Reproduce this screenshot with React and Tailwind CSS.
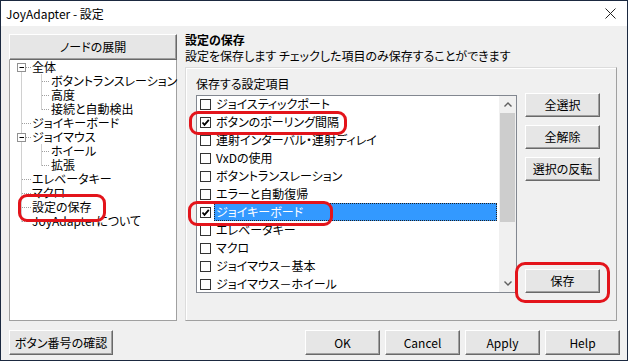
import React from 'react';

const font = "[font-family:'Noto_Sans_CJK_JP','Noto_Sans',sans-serif] [font-feature-settings:'palt']";

// ツリーの項目 (level 0 = ルート, box = 展開ボックスあり)
const treeItems = [
  { label: '全体', level: 0, box: true },
  { label: 'ボタントランスレーション', level: 1 },
  { label: '高度', level: 1 },
  { label: '接続と自動検出', level: 1 },
  { label: 'ジョイキーボード', level: 0 },
  { label: 'ジョイマウス', level: 0, box: true },
  { label: 'ホイール', level: 1 },
  { label: '拡張', level: 1 },
  { label: 'エレベータキー', level: 0 },
  { label: 'マクロ', level: 0 },
  { label: '設定の保存', level: 0 },
  { label: 'JoyAdapterについて', level: 0 },
];

const saveItems = [
  { label: 'ジョイスティックポート', checked: false },
  { label: 'ボタンのポーリング間隔', checked: true },
  { label: '連射インターバル・連射ディレイ', checked: false },
  { label: 'VxDの使用', checked: false },
  { label: 'ボタントランスレーション', checked: false },
  { label: 'エラーと自動復帰', checked: false },
  { label: 'ジョイキーボード', checked: true, selected: true },
  { label: 'エレベータキー', checked: false },
  { label: 'マクロ', checked: false },
  { label: 'ジョイマウス－基本', checked: false },
  { label: 'ジョイマウス－ホイール', checked: false },
];

const ROW = 14;

function Btn({ children, className = '' }) {
  return (
    <button
      className={`flex items-center justify-center bg-[#e6e6e6] border border-t-white border-l-white border-r-[#696969] border-b-[#696969] shadow-[inset_-1px_-1px_0_#a0a0a0] text-[12px] text-black ${className}`}
    >
      {children}
    </button>
  );
}

function TreeLines() {
  const c = (i) => i * ROW + 7.5;
  const dash = { stroke: '#a0a0a0', strokeWidth: 1, strokeDasharray: '1 1' };
  return (
    <svg className="absolute left-0 top-0" width="166" height="200">
      {/* ルートの縦線 */}
      <line x1="11.5" y1={c(0) + 5} x2="11.5" y2={c(11)} {...dash} />
      {treeItems.map((it, i) =>
        it.level === 0 ? (
          <line key={i} x1={it.box ? 16 : 12} y1={c(i)} x2="21" y2={c(i)} {...dash} />
        ) : (
          <line key={i} x1="32" y1={c(i)} x2="40" y2={c(i)} {...dash} />
        )
      )}
      {/* 子ノードの縦線 */}
      <line x1="31.5" y1={c(0) + 7} x2="31.5" y2={c(3)} {...dash} />
      <line x1="31.5" y1={c(5) + 7} x2="31.5" y2={c(7)} {...dash} />
      {/* 展開ボックス */}
      {[0, 5].map((i) => (
        <g key={i}>
          <rect x="7.5" y={c(i) - 4} width="8" height="8" fill="white" stroke="#919191" />
          <line x1="9.5" y1={c(i)} x2="14" y2={c(i)} stroke="#000" />
        </g>
      ))}
    </svg>
  );
}

function Check({ checked }) {
  return (
    <span className="w-[11px] h-[11px] shrink-0 border border-[#333] bg-white flex items-center justify-center">
      {checked && (
        <svg width="9" height="9" viewBox="0 0 9 9">
          <path d="M1.5 4.5 L3.5 6.8 L7.8 1.8" fill="none" stroke="#000" strokeWidth="1.8" />
        </svg>
      )}
    </span>
  );
}

export default function App() {
  return (
    <div className={`relative w-[628px] h-[361px] border border-[#1b2940] bg-[#f0f0f0] flex flex-col text-black overflow-hidden ${font}`}>
      {/* タイトルバー */}
      <div className="h-[25px] bg-white flex items-center pl-[5px] shrink-0">
        <span className="text-[12px]">JoyAdapter - 設定</span>
        <svg className="ml-auto mr-[11px]" width="11" height="11" viewBox="0 0 11 11">
          <path d="M0.5 0.5 L10.5 10.5 M10.5 0.5 L0.5 10.5" stroke="#222" strokeWidth="1" />
        </svg>
      </div>

      <div className="flex flex-col px-[8px] pt-[8px]">
        <div className="flex">
          {/* 左側: ツリー */}
          <div className="w-[168px] flex flex-col">
            <Btn className="h-[26px] w-full">ノードの展開</Btn>
            <div className="relative h-[261px] bg-white border border-[#a0a0a0] border-t-0">
              <TreeLines />
              <div className="relative flex flex-col">
                {treeItems.map((it) => (
                  <div
                    key={it.label}
                    className={`h-[14px] leading-[14px] text-[12px] whitespace-nowrap ${it.level === 0 ? 'pl-[22px]' : 'pl-[41px]'}`}
                  >
                    {it.label}
                  </div>
                ))}
              </div>
            </div>
          </div>

          {/* 右側 */}
          <div className="ml-[8px] w-[432px] flex flex-col">
            <div className="h-[16px] leading-[16px] -mt-[2px] text-[12px] font-bold">設定の保存</div>
            <div className="h-[16px] leading-[16px] text-[12px] whitespace-nowrap">
              設定を保存します チェックした項目のみ保存することができます
            </div>
            <div className="mt-[3px] h-[254px] border border-[#dcdcdc] border-r-[#a0a0a0] border-b-[#a0a0a0] shadow-[inset_1px_1px_0_#fff] px-[10px] flex flex-col">
              <div className="mt-[8px] h-[16px] leading-[16px] text-[12px]">保存する設定項目</div>
              <div className="mt-[3px] flex">
                {/* リストボックス */}
                <div className="w-[321px] h-[198px] bg-white border border-[#828790] flex overflow-hidden">
                  <div className="flex-1 flex flex-col -mt-[1px]">
                    {saveItems.map((it) => (
                      <div key={it.label} className="h-[18px] shrink-0 flex items-center pl-[3px]">
                        <Check checked={it.checked} />
                        <span
                          className={`ml-[3px] h-[18px] leading-[16px] px-[1px] text-[12px] whitespace-nowrap ${
                            it.selected
                              ? 'flex-1 mr-[2px] bg-[#3399ff] text-white border border-dotted border-[#222]'
                              : 'border border-transparent'
                          }`}
                        >
                          {it.label}
                        </span>
                      </div>
                    ))}
                  </div>
                  {/* スクロールバー */}
                  <div className="w-[17px] bg-[#f0f0f0] flex flex-col">
                    <div className="h-[17px] flex items-center justify-center">
                      <svg width="8" height="5" viewBox="0 0 8 5">
                        <path d="M0.5 4.5 L4 1 L7.5 4.5" fill="none" stroke="#606060" strokeWidth="1.4" />
                      </svg>
                    </div>
                    <div className="h-[109px] mx-[1px] bg-[#cdcdcd]" />
                    <div className="mt-auto h-[17px] flex items-center justify-center">
                      <svg width="8" height="5" viewBox="0 0 8 5">
                        <path d="M0.5 0.5 L4 4 L7.5 0.5" fill="none" stroke="#606060" strokeWidth="1.4" />
                      </svg>
                    </div>
                  </div>
                </div>

                {/* ボタン列 */}
                <div className="ml-[8px] -mt-[2px] w-[75px] h-[200px] flex flex-col gap-[8px]">
                  <Btn className="h-[24px]">全選択</Btn>
                  <Btn className="h-[24px]">全解除</Btn>
                  <Btn className="h-[24px]">選択の反転</Btn>
                  <Btn className="h-[24px] mt-auto">保存</Btn>
                </div>
              </div>
            </div>
          </div>
        </div>

        {/* 下部ボタン */}
        <div className="mt-[9px] flex">
          <Btn className="w-[104px] h-[25px]">ボタン番号の確認</Btn>
          <div className="ml-auto -mr-[1px] flex gap-[5px]">
            <Btn className="w-[75px] h-[25px]">OK</Btn>
            <Btn className="w-[75px] h-[25px]">Cancel</Btn>
            <Btn className="w-[75px] h-[25px]">Apply</Btn>
            <Btn className="w-[75px] h-[25px]">Help</Btn>
          </div>
        </div>
      </div>

      {/* 赤い囲み */}
      <div className="absolute left-[17px] top-[193px] w-[88px] h-[28px] rounded-[9px] border-[3px] border-[#e3141b]" />
      <div className="absolute left-[188px] top-[110px] w-[158px] h-[24px] rounded-[9px] border-[3px] border-[#e3141b]" />
      <div className="absolute left-[187px] top-[200px] w-[145px] h-[25px] rounded-[9px] border-[3px] border-[#e3141b]" />
      <div className="absolute left-[514px] top-[261px] w-[95px] h-[41px] rounded-[10px] border-[3px] border-[#e3141b]" />
    </div>
  );
}
